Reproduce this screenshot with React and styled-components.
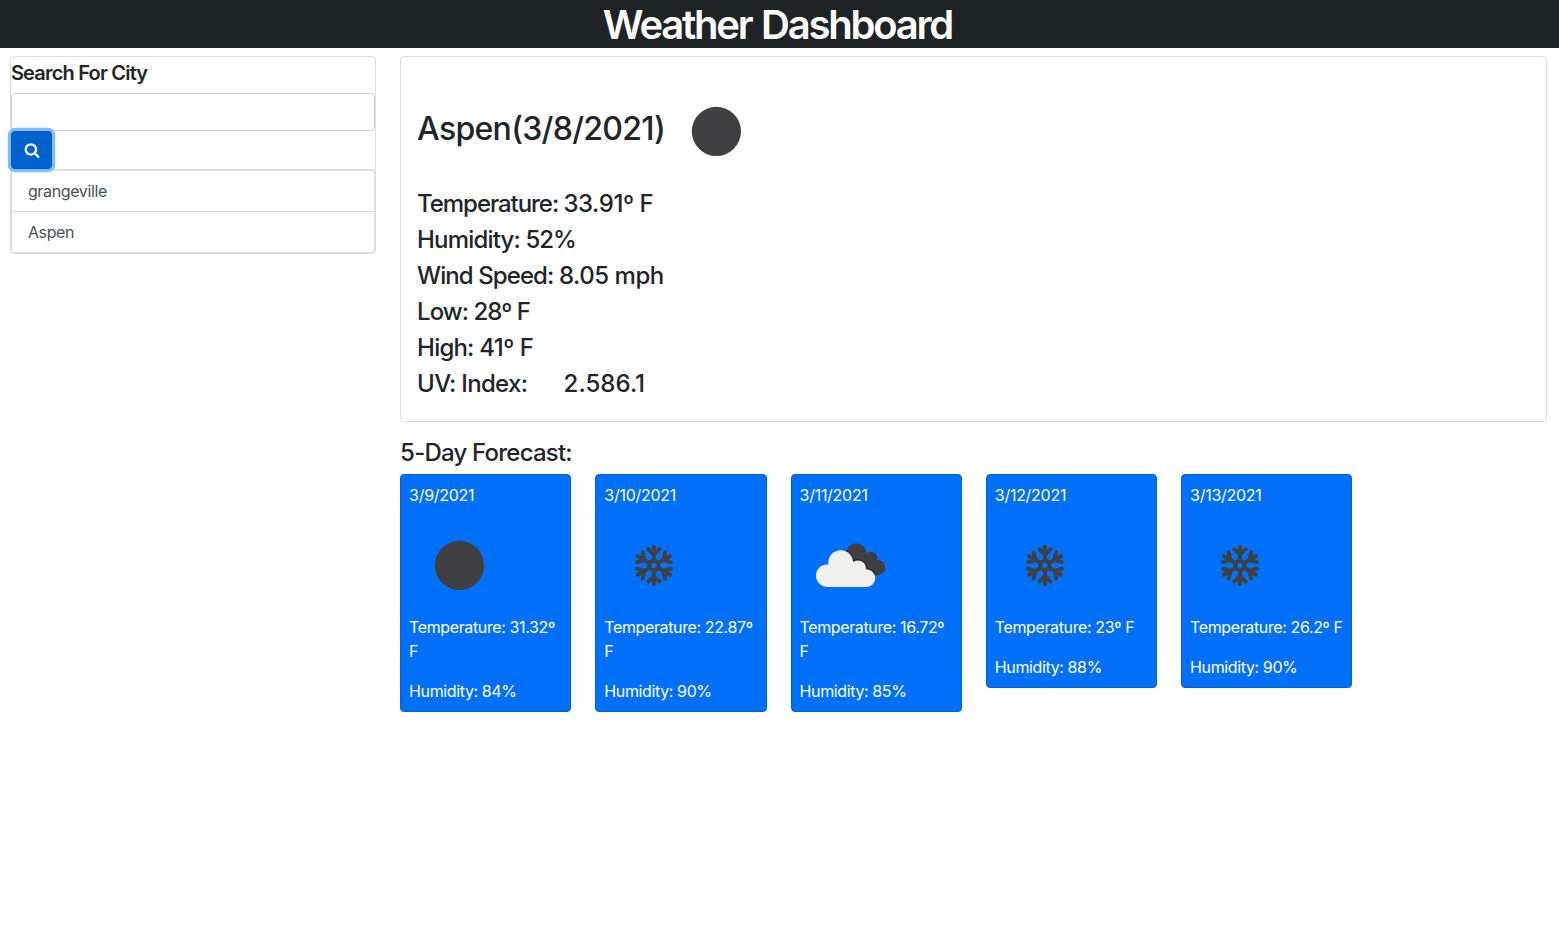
import React from 'react';
import styled, { createGlobalStyle } from 'styled-components';

const GlobalStyle = createGlobalStyle`
  *, *::before, *::after { box-sizing: border-box; }
  body {
    margin: 0;
    background: #fff;
    color: #212529;
    font-family: Inter, "Liberation Sans", sans-serif;
    font-size: 16px;
    line-height: 1.5;
    -webkit-font-smoothing: antialiased;
  }
  h1, h2, h3, h5, p, ul { margin: 0; padding: 0; }
`;

const Header = styled.header`
  height: 48px;
  background: #1e2326;
  color: #fff;
  text-align: center;
`;

const PageTitle = styled.h1`
  font-size: 40px;
  font-weight: 600;
  line-height: 50px;
  letter-spacing: -2.2px;
  word-spacing: 1.6px;
  padding-right: 4px;
`;

const Layout = styled.div`
  display: flex;
  align-items: flex-start;
  gap: 24px;
  padding: 8px 12px 0 9.9px;
`;

const Sidebar = styled.aside`
  width: 366.2px;
  flex: none;
  height: 198px;
  border: 1px solid #dcdcdc;
  border-radius: 4px;
`;

const SearchTitle = styled.h5`
  font-size: 20px;
  font-weight: 600;
  line-height: 24px;
  letter-spacing: -0.8px;
  padding: 4px 0 8px;
  white-space: nowrap;
`;

const SearchInput = styled.input`
  display: block;
  width: 100%;
  height: 38px;
  padding: 6px 12px;
  border: 1px solid #c6d0d6;
  border-radius: 4px;
  background: #fff;
  font: inherit;
`;

const SearchButton = styled.button`
  position: relative;
  z-index: 1;
  display: flex;
  align-items: center;
  justify-content: center;
  width: 41.5px;
  height: 38px;
  padding: 0;
  border: 1px solid #005cbf;
  border-radius: 4px;
  background: #0062cc;
  color: #fff;
  box-shadow: 0 0 0 3.2px #80bdff;
`;

const CityList = styled.ul`
  list-style: none;
  border: 1px solid #dcdcdc;
  border-top-width: 2px;
  border-radius: 4px;
`;

const City = styled.li`
  height: 40px;
  padding: 8px 16px;
  line-height: 25px;
  letter-spacing: -0.36px;
  color: #495057;
  & + & {
    height: 41px;
    border-top: 1px solid #dcdcdc;
  }
`;

const Main = styled.main`
  flex: 1;
  min-width: 0;
`;

const CurrentCard = styled.section`
  height: 366px;
  padding: 16px;
  border: 1px solid #dcdcdc;
  border-radius: 4px;
`;

const CityHeading = styled.div`
  display: flex;
  align-items: center;
  height: 113px;
  padding-top: 3px;
  gap: 1px;
`;

const CityName = styled.h2`
  font-size: 32px;
  font-weight: 500;
  line-height: 38px;
  padding-bottom: 5px;
  letter-spacing: -0.71px;
  white-space: nowrap;
`;

const Reading = styled.p`
  height: 36px;
  font-size: 24px;
  font-weight: 500;
  line-height: 36px;
  white-space: pre;
`;

const Tracked = styled.span`
  letter-spacing: ${(p) => p.$tracking}px;
  margin-left: ${(p) => p.$offset || 0}px;
`;

const ForecastTitle = styled.h3`
  margin: 17px 0 7px;
  font-size: 24px;
  font-weight: 500;
  line-height: 28px;
  letter-spacing: -0.78px;
`;

const ForecastRow = styled.div`
  display: flex;
  align-items: flex-start;
  gap: 24px;
`;

const DayCard = styled.article`
  width: 171.25px;
  flex: none;
  padding: 8px;
  border: 1px solid #0062cc;
  border-radius: 4px;
  background: #0070f8;
  color: #fff;
  letter-spacing: -0.38px;
`;

const DayDate = styled.p`
  letter-spacing: -0.28px;
`;

const DayText = styled.p`
  margin-right: -2px;
  & + & { margin-top: 16px; }
`;

const DayIcon = styled.div`
  height: 108px;
  padding-top: 8px;
`;

const IconBox = styled.svg`
  display: block;
  flex: none;
  width: 100px;
  height: 100px;
`;

const ClearIcon = () => (
  <IconBox viewBox="0 0 100 100"><circle cx="50.4" cy="50.4" r="24.6" fill="#404042" /></IconBox>
);

const SnowIcon = () => (
  <IconBox viewBox="0 0 100 100">
    <g transform="translate(49.9 50.4)" fill="none" stroke="#404042" strokeWidth="3.9" strokeLinecap="round">
      <circle r="4.6" />
      {[0, 60, 120, 180, 240, 300].map((a) => (
        <path key={a} transform={`rotate(${a})`} d="M0-5V-18.6M-5.6-16.3L0-10.8L5.6-16.3" />
      ))}
    </g>
  </IconBox>
);

const FrontCloud = (props) => (
  <g {...props}>
    <circle cx="27.2" cy="60.7" r="11.2" />
    <circle cx="40.7" cy="47.6" r="12.4" />
    <circle cx="58" cy="53.5" r="8.1" />
    <circle cx="66.5" cy="63.1" r="8.8" />
    <path d="M27 71.9V58L40 45L58 53L66.5 62V71.9Z" />
  </g>
);

const CloudIcon = () => (
  <IconBox viewBox="0 0 100 100">
    <defs>
      <clipPath id="rear-cloud">
        <circle cx="56.3" cy="38.9" r="10.4" />
        <circle cx="71.1" cy="43" r="6.3" />
        <circle cx="77.6" cy="52.6" r="7.7" />
        <path d="M56 38L71 40L78.5 60.3H62Z" />
      </clipPath>
    </defs>
    <g clipPath="url(#rear-cloud)">
      <path d="M40 25H90V65H40Z" fill="#404042" />
      <FrontCloud fill="#262626" stroke="#262626" strokeWidth="2.6" />
    </g>
    <FrontCloud fill="#f0f0ee" />
  </IconBox>
);

const SearchIcon = () => (
  <svg width="16" height="16" viewBox="0 0 1792 1792" fill="currentColor">
    <path d="M1216 832q0-185-131.5-316.5t-316.5-131.5-316.5 131.5-131.5 316.5 131.5 316.5 316.5 131.5 316.5-131.5 131.5-316.5zm512 832q0 52-38 90t-90 38q-54 0-90-38l-343-342q-179 124-399 124-143 0-273.5-55.5t-225-150-150-225-55.5-273.5 55.5-273.5 150-225 225-150 273.5-55.5 273.5 55.5 225 150 150 225 55.5 273.5q0 220-124 399l343 343q37 37 37 90z" />
  </svg>
);

const icons = { clear: ClearIcon, snow: SnowIcon, cloud: CloudIcon };

const readings = [
  { label: 'Temperature: ', value: '33.91º F', labelTracking: -1.06, valueTracking: -0.45 },
  { label: 'Humidity: ', value: '52%', labelTracking: -0.83, valueTracking: -1 },
  { label: 'Wind Speed: ', value: '8.05 mph', labelTracking: -0.92, valueTracking: -0.45 },
  { label: 'Low: ', value: '28º F', labelTracking: -0.98, valueTracking: -0.98 },
  { label: 'High: ', value: '41º F', labelTracking: -0.8, valueTracking: -0.5 },
  { label: 'UV: Index:', value: '2.586.1', labelTracking: -0.68, valueTracking: 0.05, offset: 36.3 },
];

const days = [
  { date: '3/9/2021', icon: 'clear', temp: '31.32', humidity: 84 },
  { date: '3/10/2021', icon: 'snow', temp: '22.87', humidity: 90 },
  { date: '3/11/2021', icon: 'cloud', temp: '16.72', humidity: 85 },
  { date: '3/12/2021', icon: 'snow', temp: '23', humidity: 88 },
  { date: '3/13/2021', icon: 'snow', temp: '26.2', humidity: 90 },
];

export default function App() {
  return (
    <>
      <GlobalStyle />
      <Header><PageTitle>Weather Dashboard</PageTitle></Header>
      <Layout>
        <Sidebar>
          <SearchTitle>Search For City</SearchTitle>
          <SearchInput aria-label="City" />
          <SearchButton aria-label="Search"><SearchIcon /></SearchButton>
          <CityList>
            <City>grangeville</City>
            <City>Aspen</City>
          </CityList>
        </Sidebar>
        <Main>
          <CurrentCard>
            <CityHeading><CityName>Aspen(3/8/2021)</CityName><ClearIcon /></CityHeading>
            {readings.map((r) => (
              <Reading key={r.label}>
                <Tracked $tracking={r.labelTracking}>{r.label}</Tracked>
                <Tracked $tracking={r.valueTracking} $offset={r.offset}>{r.value}</Tracked>
              </Reading>
            ))}
          </CurrentCard>
          <ForecastTitle>5-Day Forecast:</ForecastTitle>
          <ForecastRow>
            {days.map(({ date, icon, temp, humidity }) => {
              const Icon = icons[icon];
              return (
                <DayCard key={date}>
                  <DayDate>{date}</DayDate>
                  <DayIcon><Icon /></DayIcon>
                  <DayText>{`Temperature: ${temp}º F`}</DayText>
                  <DayText>{`Humidity: ${humidity}%`}</DayText>
                </DayCard>
              );
            })}
          </ForecastRow>
        </Main>
      </Layout>
    </>
  );
}
